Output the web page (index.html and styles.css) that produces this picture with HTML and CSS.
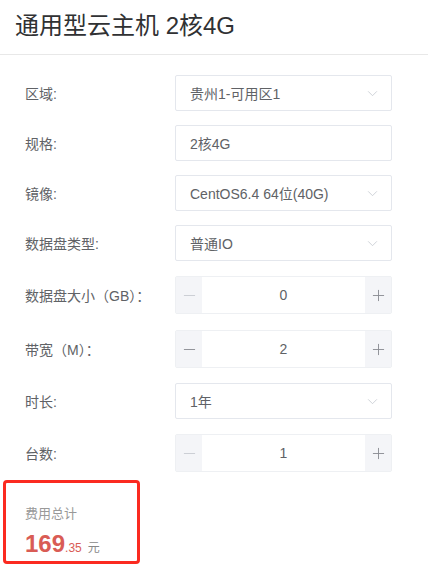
FILE: index.html
```html
<!DOCTYPE html>
<html lang="zh">
<head>
<meta charset="utf-8">
<link rel="stylesheet" href="styles.css">
</head>
<body>
<div class="page">
  <header class="head"><h1 class="title">通用型云主机 2核4G</h1></header>
  <div class="form">
    <div class="row"><span class="label">区域:</span><div class="select"><span>贵州1-可用区1</span><svg class="arrow" viewBox="0 0 12 8"><path d="M1 1.5 L6 6.5 L11 1.5"/></svg></div></div>
    <div class="row"><span class="label">规格:</span><div class="select"><span>2核4G</span></div></div>
    <div class="row"><span class="label">镜像:</span><div class="select"><span>CentOS6.4 64位(40G)</span><svg class="arrow" viewBox="0 0 12 8"><path d="M1 1.5 L6 6.5 L11 1.5"/></svg></div></div>
    <div class="row"><span class="label">数据盘类型:</span><div class="select"><span>普通IO</span><svg class="arrow" viewBox="0 0 12 8"><path d="M1 1.5 L6 6.5 L11 1.5"/></svg></div></div>
    <div class="row row-num"><span class="label">数据盘大小（GB）：</span><div class="stepper"><span class="btn dim"><svg viewBox="0 0 14 14"><path d="M1 7 H13"/></svg></span><span class="val">0</span><span class="btn"><svg viewBox="0 0 14 14"><path d="M1 7 H13 M7 1 V13"/></svg></span></div></div>
    <div class="row row-num"><span class="label">带宽（M）：</span><div class="stepper"><span class="btn"><svg viewBox="0 0 14 14"><path d="M1 7 H13"/></svg></span><span class="val">2</span><span class="btn"><svg viewBox="0 0 14 14"><path d="M1 7 H13 M7 1 V13"/></svg></span></div></div>
    <div class="row"><span class="label">时长:</span><div class="select"><span>1年</span><svg class="arrow" viewBox="0 0 12 8"><path d="M1 1.5 L6 6.5 L11 1.5"/></svg></div></div>
    <div class="row row-num"><span class="label">台数:</span><div class="stepper"><span class="btn dim"><svg viewBox="0 0 14 14"><path d="M1 7 H13"/></svg></span><span class="val">1</span><span class="btn"><svg viewBox="0 0 14 14"><path d="M1 7 H13 M7 1 V13"/></svg></span></div></div>
  </div>
  <div class="total">
    <div class="total-label">费用总计</div>
    <div class="price"><span class="int">169</span><span class="dec">.35</span><span class="unit">元</span></div>
  </div>
</div>
</body>
</html>
```
FILE: styles.css
```css
html, body { margin: 0; padding: 0; background: #fff; }
body { font-family: Arial, "Liberation Sans", "Noto Sans CJK SC", sans-serif; color: #606266; }
.page { width: 428px; height: 566px; overflow: hidden; }
.head { height: 54px; border-bottom: 1px solid #e8e8e8; box-sizing: content-box; display: flex; align-items: center; padding-left: 15px; }
.title { margin: 0; font-size: 24px; font-weight: normal; color: #303133; line-height: 1; position: relative; top: -1px; }
.form { padding: 20px 0 0 25px; display: flex; flex-direction: column; gap: 14px; }
.row { display: flex; align-items: center; height: 36px; }
.row-num { height: 38px; margin: 1px 0; }
.label { width: 150px; font-size: 14px; color: #606266; }
.select { width: 217px; height: 36px; box-sizing: border-box; border: 1px solid #e4e7ed; border-radius: 2px; display: flex; align-items: center; justify-content: space-between; padding: 0 13px 0 14px; font-size: 14px; color: #606266; }
.arrow { width: 11px; height: 7px; fill: none; stroke: #c8cbd2; stroke-width: 1; }
.stepper { width: 217px; height: 38px; display: flex; background: #fff; border: 1px solid #eef0f3; box-sizing: border-box; border-radius: 2px; }
.btn { width: 26px; background: #f4f5f8; display: flex; align-items: center; justify-content: center; }
.btn svg { width: 13px; height: 13px; fill: none; stroke: #8a8d93; stroke-width: 1; }
.btn.dim svg { stroke: #c8cbd2; }
.val { flex: 1; text-align: center; line-height: 36px; font-size: 14px; color: #606266; }
.total { margin: 7px 0 0 3px; width: 137px; height: 84px; box-sizing: border-box; border: 3px solid #fb2a20; border-radius: 4px; padding: 23px 0 0 19px; }
.total-label { font-size: 13px; color: #999; line-height: 16px; }
.price { margin-top: 10px; line-height: 24px; white-space: nowrap; }
.int { font-size: 24px; font-weight: bold; color: #d95c55; }
.dec { font-size: 12px; color: #d95c55; }
.unit { font-size: 12px; color: #888; margin-left: 6px; }
```
